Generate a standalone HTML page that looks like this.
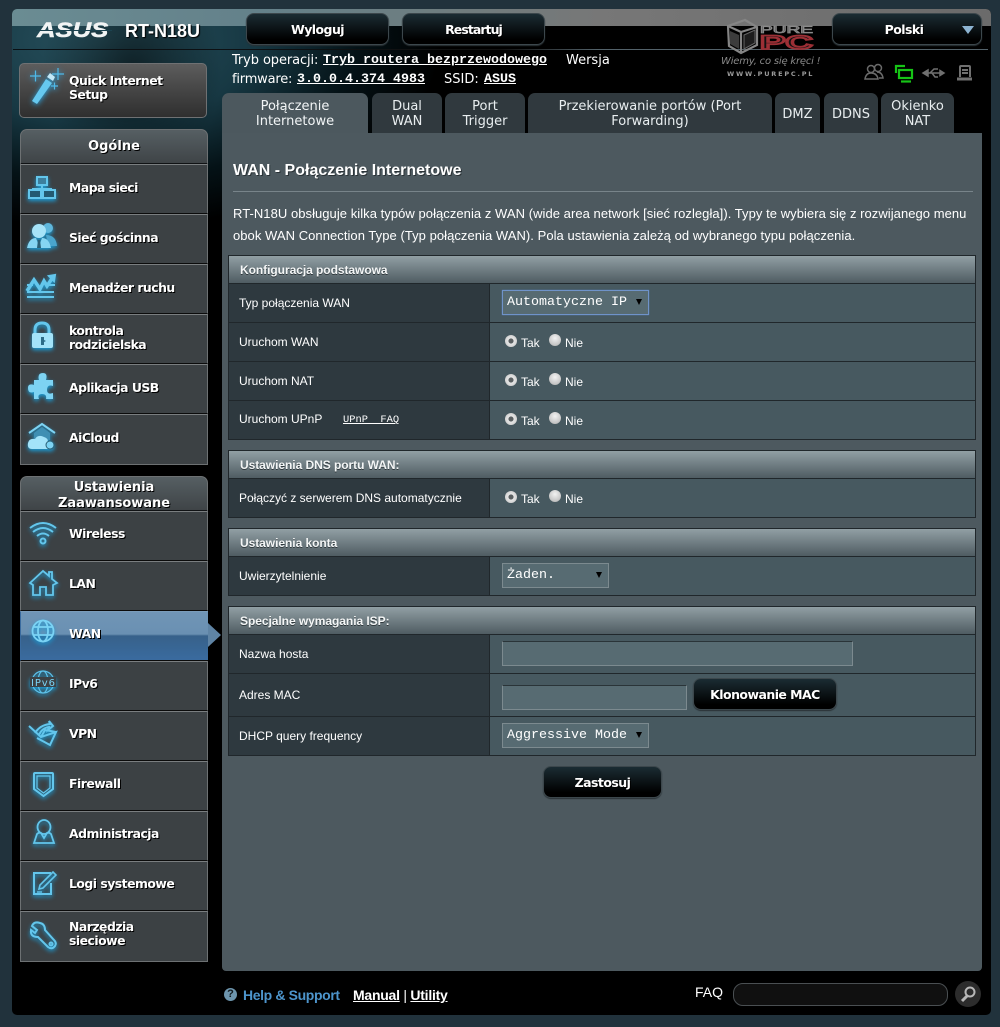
<!DOCTYPE html>
<html lang="pl"><head><meta charset="utf-8"><title>RT-N18U</title>
<style>
*{box-sizing:border-box}
html,body{margin:0;padding:0;width:1000px;height:1027px;overflow:hidden;background:#21323c}
body{position:relative;font-family:"Liberation Sans",sans-serif;color:#fff}
.a{position:absolute}
.frame{left:12px;top:9px;width:979px;height:1006px;background:#000;border-radius:5px;overflow:hidden}
.hb{position:absolute;left:0;top:0;width:979px;height:280px;background:
radial-gradient(ellipse 90px 110px at 120px 60px,rgba(0,0,0,.55),transparent 100%),
radial-gradient(ellipse 340px 190px at 90px 30px,#28525f 0,#173843 45%,rgba(5,20,25,.9) 75%,transparent 100%),#000}
.hb2{position:absolute;left:0;top:0;width:979px;height:17px;background:linear-gradient(90deg,#6a8c93 0,#64818a 25%,#6f7d7f 45%,#777 60%,#6b6b6b 100%)}
.hl{position:absolute;left:1px;top:40px;width:975px;height:1px;background:linear-gradient(90deg,#0a1014 0,#111 50%,#53626a 60%,#53626a 100%)}
.btn{position:absolute;background:linear-gradient(#1b2c33 0,#000 85%);border:1px solid #3c474c;border-radius:8px;box-shadow:0 1px 1px #2a3236;text-align:center;font:bold 12.5px "DejaVu Sans",sans-serif;letter-spacing:-.55px;color:#fff;text-shadow:1px 1px 0 #000}
.v{font-family:"DejaVu Sans",sans-serif}
.m{font-family:"Liberation Mono",monospace}
.hd{position:absolute;left:20px;width:188px;height:36px;background:linear-gradient(#565f63,#3f4447);border:1px solid #6d7173;border-bottom:2px solid #101214;border-radius:7px 7px 0 0;text-align:center;font:bold 13px/16px "DejaVu Sans",sans-serif;color:#fff;text-shadow:1px 1px 0 #000}
.it{position:absolute;left:20px;width:188px;height:50px;background:#3c4144;border-left:1px solid #6d7173;border-right:1px solid #6d7173;border-top:1px solid #7a7e80;border-bottom:1px solid #0b0b0b}
.it.last{border-bottom:1px solid #6d7173}
.it.sel{background:linear-gradient(#7095b6 0,#6a90b2 46%,#37618a 50%,#3a6b9f 100%);border-left-color:#3a6b9f;border-right:none;border-top-color:#7a9cba}
.lb{position:absolute;left:69px;font:bold 12.4px/14px "DejaVu Sans",sans-serif;letter-spacing:-.5px;color:#fff;text-shadow:1px 1px 0 #000;white-space:nowrap}
svg.ic{position:absolute;left:26px;width:32px;height:32px;overflow:visible;filter:drop-shadow(0 2px 2px #1b9ed8)}
.tab{position:absolute;top:93px;height:40px;background:#30393e;border-radius:7px 7px 0 0;text-align:center;font:13px/15px "DejaVu Sans",sans-serif;color:#e9eef0;display:flex;align-items:center;justify-content:center;padding:2px 4px 0}
.tab.on{background:#4c585e;color:#f2f5f6}
.panel{left:222px;top:133px;width:760px;height:838px;background:#4d595f;border-radius:0 0 4px 4px}
.sh{position:absolute;left:228px;width:748px;height:29px;background:linear-gradient(#919fa4 0,#4f5c62 100%);border:1px solid #20272b;font:bold 12px/28px "Liberation Sans",sans-serif;letter-spacing:-.05px;padding-left:11px;color:#f4f6f6;text-shadow:0 1px 0 #30393d}
.r{position:absolute;left:228px;width:748px;background:#475960;border:1px solid #20272b;border-top:none}
.r i{position:absolute;left:0;top:0;bottom:0;width:261px;background:#2e393f;border-right:1px solid #20272b;display:block}
.t{position:absolute;font:12px/14px "Liberation Sans",sans-serif;color:#fff;white-space:nowrap}
.rd{position:absolute;width:12px;height:12px;border-radius:50%;background:radial-gradient(circle at 50% 35%,#f2f2f2,#c4c4c4 70%,#a6a6a6)}
.rd.c{background:radial-gradient(circle,#5a5f61 0,#5a5f61 27%,#e6e6e6 33%,#d2d2d2 70%,#a8a8a8)}
.dd{position:absolute;background:#576b72;border:1px solid #7c8a8f;font:13.33px/23px "Liberation Mono",monospace;color:#fff;padding-left:4px;white-space:nowrap}
.dd b{position:absolute;right:6px;top:8px;width:0;height:0;border-left:3.5px solid transparent;border-right:3.5px solid transparent;border-top:6px solid #000}
.inp{position:absolute;background:#576b72;border:1px solid #7c8a8f;border-top:1px solid #2a3438;height:25px}
</style></head><body>
<div class="a frame">
<div class="hb"></div><div class="hb2"></div><div class="hl"></div>
</div>

<!-- logo -->
<div class="a" style="left:36px;top:17px;width:76px;height:26px;overflow:hidden"><span class="a" style="left:1px;top:0;font:italic bold 21px/28px 'Liberation Sans',sans-serif;color:#f2f4f4;-webkit-text-stroke:.5px #f2f4f4;transform:scaleX(1.22);transform-origin:0 0">ASUS</span><span class="a" style="left:0;top:13px;width:76px;height:1px;background:#1c4350"></span></div>
<div class="a" style="left:125px;top:20px;font:bold 18px/22px 'Liberation Sans',sans-serif;color:#fff;text-shadow:1px 1px 1px #000">RT-N18U</div>

<div class="btn" style="left:246px;top:13px;width:143px;height:32px;line-height:32px">Wyloguj</div>
<div class="btn" style="left:402px;top:13px;width:143px;height:32px;line-height:32px;letter-spacing:-.95px">Restartuj</div>
<div class="btn" style="left:832px;top:13px;width:150px;height:32px;line-height:32px;padding-right:6px">Polski<span class="a" style="left:129px;top:12px;width:0;height:0;border-left:6px solid transparent;border-right:6px solid transparent;border-top:8px solid #8db4d2"></span></div>

<!-- PurePC watermark -->
<svg class="a" style="left:726px;top:18px" width="92" height="38" viewBox="0 0 92 38">
<g fill="none" stroke="#858585" stroke-width="2.200"><path d="M2 8 L19 2 L31 9 L31 27 L15 35 L3 28 Z"/><path d="M2 8 L15 14 L31 9 M15 14 L15 35"/></g>
<path d="M4 13 L13 17 L13 31 L4 26Z" fill="#3c3c3c"/><path d="M18 17 L29 12 L29 25 L18 31Z" fill="#1d1d1d" stroke="#666"/>
<text x="34" y="15" font-family="Liberation Sans,sans-serif" font-size="10" fill="none" stroke="#8a8a8a" stroke-width=".8" textLength="53" lengthAdjust="spacingAndGlyphs">PURE</text>
<text x="34" y="31" font-family="Liberation Sans,sans-serif" font-weight="bold" font-size="19" fill="#111" stroke="#9c2f35" stroke-width="1.800" textLength="53" lengthAdjust="spacingAndGlyphs">PC</text>
</svg>
<div class="a" style="left:721px;top:56px;font:italic 10px/12px 'DejaVu Sans',sans-serif;color:#8a8a8a;white-space:nowrap;letter-spacing:-.2px">Wiemy, co się kręci !</div>
<div class="a" style="left:727px;top:70px;font:bold 6.5px/8px 'DejaVu Sans',sans-serif;color:#9a9a9a;white-space:nowrap;letter-spacing:1.8px">WWW.PUREPC.PL</div>

<!-- status text -->
<div class="a v" style="left:232px;top:53px;font-size:13px;line-height:16px;white-space:nowrap;letter-spacing:-.1px">Tryb operacji:</div>
<div class="a m" style="left:323px;top:53px;font-size:13.33px;line-height:16px;font-weight:bold;text-decoration:underline;white-space:nowrap">Tryb routera bezprzewodowego</div>
<div class="a v" style="left:566px;top:53px;font-size:13px;line-height:16px">Wersja</div>
<div class="a v" style="left:232px;top:72px;font-size:13px;line-height:16px;letter-spacing:-.2px">firmware:</div>
<div class="a m" style="left:297px;top:72px;font-size:13.33px;line-height:16px;font-weight:bold;text-decoration:underline;white-space:nowrap">3.0.0.4.374_4983</div>
<div class="a v" style="left:444px;top:72px;font-size:13px;line-height:16px">SSID:</div>
<div class="a m" style="left:484px;top:72px;font-size:13.33px;line-height:16px;font-weight:bold;text-decoration:underline">ASUS</div>

<!-- status icons -->
<svg class="a" style="left:862px;top:62px" width="125" height="22" viewBox="0 0 125 22" fill="none">
<g stroke="#6a6a6a" stroke-width="1.500"><circle cx="9" cy="7" r="3.500"/><circle cx="16" cy="6" r="3.500"/><path d="M3 17 Q4 11 9 11 Q15 11 16 17 Z"/><path d="M15 10 Q20 10 21 16 L17 16"/></g>
<g stroke="#16c316" stroke-width="2.200"><path d="M34 11 V4 H43"/><rect x="37" y="8" width="13" height="8"/><path d="M39 19.500 H49"/></g>
<g stroke="#707070" stroke-width="1.500"><path d="M62 11 H81"/><path d="M61 11 l5 -3 v6z" fill="#707070"/><path d="M68 11 L72 7 H76 M70 11 L73 15 H76"/><path d="M82 11 l-4 -2.500 v5z" fill="#707070"/></g>
<g stroke="#707070" stroke-width="2"><path d="M98 15 V5 Q98 4 99 4 H107 Q108 4 108 5 V15"/><path d="M100 8 H106 M100 11 H106"/><path d="M95 17 H110" stroke-width="3"/></g>
</svg>

<!-- quick setup -->
<div class="a" style="left:19px;top:63px;width:188px;height:55px;background:linear-gradient(#5d5d5d 0,#454545 50%,#2f2f2f 100%);border:1px solid #6f7173;border-radius:5px"></div>
<svg class="a" style="left:26px;top:66px;filter:drop-shadow(0 1px 3px #2aa8e6)" width="40" height="40" viewBox="0 0 40 40" fill="none">
<path d="M6 35 L20 13 L26 17 L11 38 Z" fill="#66c8ef"/><path d="M21 11 L24 7 L29 11 L27 15 Z" fill="#c3e9f8"/>
<g stroke="#4fb9e8" stroke-width="1.200"><path d="M4 10 H15 M9.500 4.500 V15.500"/><path d="M26 8 H38 M32 2 V14"/><path d="M25 20 H32 M28.500 16.500 V23.500"/></g></svg>
<div class="lb" style="top:74px">Quick Internet<br>Setup</div>

<!-- General menu -->
<div class="hd" style="top:129px;line-height:34px">Ogólne</div>
<div class="it" style="top:164px"></div><div class="lb" style="top:181px">Mapa sieci</div>
<div class="it" style="top:214px"></div><div class="lb" style="top:231px">Sieć gościnna</div>
<div class="it" style="top:264px"></div><div class="lb" style="top:281px">Menadżer ruchu</div>
<div class="it" style="top:314px"></div><div class="lb" style="top:324px">kontrola<br>rodzicielska</div>
<div class="it" style="top:364px"></div><div class="lb" style="top:381px">Aplikacja USB</div>
<div class="it last" style="top:414px;height:51px"></div><div class="lb" style="top:431px">AiCloud</div>

<svg class="ic" style="top:172px" viewBox="0 0 32 32" fill="none" stroke="#63c6ec" stroke-width="2"><rect x="11" y="5" width="10" height="8" fill="#3d7f9d"/><path d="M16 13 V17 M7 20 V17 H25 V20"/><rect x="3" y="18" width="12" height="8" fill="#235a72"/><rect x="17" y="18" width="12" height="8" fill="#235a72"/></svg>
<svg class="ic" style="top:222px" viewBox="0 0 32 32"><circle cx="22" cy="6" r="5" fill="#5fb7dc"/><path d="M20 13 Q30 13 31 24 L22 24Z" fill="#4aa5cd"/><circle cx="13" cy="9" r="7" fill="#a6e3f8"/><path d="M1 26 Q3 16 10 16 L13 24 L16 16 Q23 16 25 26 Z" fill="#85d5f3"/><path d="M12 18 L14 18 L15 26 L11 26Z" fill="#2a5f75"/></svg>
<svg class="ic" style="top:272px" viewBox="0 0 32 32" fill="none" stroke="#63c6ec" stroke-width="2"><path d="M1 19 L8 8 L14 17 L18 9 L21 14 L27 5" stroke-width="3.500"/><path d="M23 4 L29 3 L28 9Z" fill="#63c6ec"/><path d="M1 13 H7 M23 13 H29 M1 20 H28 M1 25 H28"/></svg>
<svg class="ic" style="top:322px" viewBox="0 0 32 32"><path d="M9 12 V8 Q9 1 16 1 Q23 1 23 8 V12" fill="none" stroke="#63c6ec" stroke-width="3"/><rect x="6" y="11" width="21" height="15" rx="2" fill="#a3e3f9"/><path d="M15 15 h3 v3 l2 1 l-2 1 v3 h-3z" fill="#2d6c88"/></svg>
<svg class="ic" style="top:372px" viewBox="0 0 32 32"><path d="M8 8 H13 Q11 1 17 1 Q22 1 20 8 H27 V14 Q21 12 21 18 Q21 23 27 21 V27 H20 Q21 22 16 22 Q11 22 13 27 H8 V20 Q2 22 2 16 Q2 11 8 13 Z" fill="#7dd3f3"/></svg>
<svg class="ic" style="top:422px" viewBox="0 0 32 32"><path d="M3 11 L16 2 L29 11" fill="none" stroke="#7dd3f3" stroke-width="2"/><path d="M8 11 L16 5 L24 11 V18 H8Z" fill="#3f8fb3"/><path d="M6 27 Q1 27 2 21 Q3 16 9 17 Q12 12 18 15 Q22 16 22 20 L26 27Z" fill="#a3e3f9"/><circle cx="24" cy="23" r="4" fill="#7dd3f3" stroke="#2a5f75"/></svg>

<!-- Advanced -->
<div class="hd" style="top:476px;padding-top:3px;letter-spacing:-.05px">Ustawienia<br>Zaawansowane</div>
<div class="it" style="top:511px"></div><div class="lb" style="top:527px">Wireless</div>
<div class="it" style="top:561px"></div><div class="lb" style="top:577px">LAN</div>
<div class="it sel" style="top:611px"></div><div class="lb" style="top:627px">WAN</div>
<div class="a" style="left:208px;top:623px;width:0;height:0;border-top:12px solid transparent;border-bottom:12px solid transparent;border-left:13px solid #5f84a5"></div>
<div class="it" style="top:661px"></div><div class="lb" style="top:677px">IPv6</div>
<div class="it" style="top:711px"></div><div class="lb" style="top:727px">VPN</div>
<div class="it" style="top:761px"></div><div class="lb" style="top:777px">Firewall</div>
<div class="it" style="top:811px"></div><div class="lb" style="top:827px">Administracja</div>
<div class="it" style="top:861px"></div><div class="lb" style="top:877px">Logi systemowe</div>
<div class="it last" style="top:911px;height:51px"></div><div class="lb" style="top:920px">Narzędzia<br>sieciowe</div>

<svg class="ic" style="top:519px" viewBox="0 0 32 32" fill="none" stroke="#63c6ec" stroke-width="2"><path d="M4 9 Q17 -1 30 9"/><path d="M7 13 Q17 5 27 13"/><path d="M11 17 Q17 12 23 17"/><circle cx="17" cy="22" r="2.500"/></svg>
<svg class="ic" style="top:569px" viewBox="0 0 32 32" fill="none" stroke="#63c6ec" stroke-width="1.800"><path d="M4 14 L17 2 L23 7 V3 H26 V10 L31 14 L27 16 V26 H20 V18 H14 V26 H7 V16 Z"/></svg>
<svg class="ic" style="top:619px" viewBox="0 0 32 32" fill="none" stroke="#7ad3f5" stroke-width="1.800"><circle cx="17" cy="12" r="10.500"/><ellipse cx="17" cy="12" rx="5" ry="10.500"/><path d="M7 8 H27 M7 16 H27"/></svg>
<svg class="ic" style="top:669px" viewBox="0 0 32 32" fill="none" stroke="#5cc0e8" stroke-width="1.200"><circle cx="17" cy="13" r="11"/><ellipse cx="17" cy="13" rx="5" ry="11"/><rect x="4" y="8" width="26" height="10" fill="#3c4144" stroke="none"/><text x="17" y="17" text-anchor="middle" font-family="DejaVu Sans,sans-serif" font-size="10" fill="#7ad3f5" stroke="none" textLength="24">IPv6</text></svg>
<svg class="ic" style="top:719px" viewBox="0 0 32 32" fill="none" stroke="#63c6ec" stroke-width="2"><path d="M3 7 L15 18 L30 13 L24 26 L11 19"/><path d="M9 14 Q14 6 24 5 L23 2 L27 7 L22 11 L23 8 Q16 9 13 16"/><path d="M15 18 L19 11 L30 13"/></svg>
<svg class="ic" style="top:769px" viewBox="0 0 32 32" fill="none" stroke="#63c6ec" stroke-width="2"><path d="M8 5 Q8 4 9 4 H26 Q27 4 27 5 V20 L17.500 27 L8 20 Z"/><path d="M11 7 H24 V19 L17.500 24 L11 19 Z" stroke-width="1.200"/></svg>
<svg class="ic" style="top:819px" viewBox="0 0 32 32" fill="none" stroke="#63c6ec" stroke-width="1.800"><ellipse cx="18" cy="8" rx="6.500" ry="7"/><path d="M8 24 L11 15 Q13 13 15 14 L18 19 L21 14 Q23 13 25 15 L28 24 Z"/></svg>
<svg class="ic" style="top:869px" viewBox="0 0 32 32" fill="none" stroke="#63c6ec" stroke-width="2"><path d="M25 14 V25 H8 V4 H25"/><path d="M13 20 L14 16 L27 3 L30 6 L17 19Z" stroke-width="1.600"/><path d="M11 23 H16" stroke-width="1.400"/></svg>
<svg class="ic" style="top:919px" viewBox="0 0 32 32" fill="none" stroke="#63c6ec" stroke-width="2"><path d="M14 4 Q8 2 6 7 L11 11 L9 14 L5 11 Q4 18 12 18 L22 28 Q26 31 29 27 Q31 24 28 21 L19 11 Q19 5 14 4Z"/><circle cx="25" cy="25" r="1.500"/></svg>

<!-- tabs -->
<div class="tab on" style="left:222px;width:146px">Połączenie<br>Internetowe</div>
<div class="tab" style="left:372px;width:70px">Dual<br>WAN</div>
<div class="tab" style="left:445px;width:80px">Port<br>Trigger</div>
<div class="tab" style="left:528px;width:244px">Przekierowanie portów (Port<br>Forwarding)</div>
<div class="tab" style="left:775px;width:45px">DMZ</div>
<div class="tab" style="left:824px;width:54px">DDNS</div>
<div class="tab" style="left:881px;width:73px">Okienko<br>NAT</div>

<!-- panel -->
<div class="a panel"></div>
<div class="a" style="left:233px;top:161px;font:bold 16px/19px 'Liberation Sans',sans-serif;color:#fff;text-shadow:1px 1px 0 #2a3236;white-space:nowrap">WAN - Połączenie Internetowe</div>
<div class="a" style="left:233px;top:191px;width:740px;height:1px;background:#78848a"></div>
<div class="a" style="left:233px;top:203px;width:740px;font:13px/22px 'Liberation Sans',sans-serif;letter-spacing:.05px;color:#fff;white-space:nowrap">RT-N18U obsługuje kilka typów połączenia z WAN (wide area network [sieć rozległa]). Typy te wybiera się z rozwijanego menu<br>obok WAN Connection Type (Typ połączenia WAN). Pola ustawienia zależą od wybranego typu połączenia.</div>

<!-- sec 1 -->
<div class="sh" style="top:255px">Konfiguracja podstawowa</div>
<div class="r" style="top:284px;height:39px"><i></i></div>
<div class="r" style="top:323px;height:39px"><i></i></div>
<div class="r" style="top:362px;height:39px"><i></i></div>
<div class="r" style="top:401px;height:39px"><i></i></div>
<div class="t" style="left:239px;top:296px">Typ połączenia WAN</div>
<div class="t" style="left:239px;top:335px">Uruchom WAN</div>
<div class="t" style="left:239px;top:374px">Uruchom NAT</div>
<div class="t" style="left:239px;top:412px">Uruchom UPnP</div>
<div class="a m" style="left:343px;top:413px;font-size:10.4px;line-height:14px;text-decoration:underline;white-space:pre">UPnP  FAQ</div>
<div class="dd" style="left:502px;top:290px;width:147px;height:25px;border:1px solid #6f93c9;box-shadow:0 0 1px #5b85c4">Automatyczne IP<b></b></div>

<div class="rd c" style="left:505px;top:335px"></div><div class="t" style="left:521px;top:336px">Tak</div><div class="rd" style="left:549px;top:334px"></div><div class="t" style="left:565px;top:336px">Nie</div>
<div class="rd c" style="left:505px;top:374px"></div><div class="t" style="left:521px;top:375px">Tak</div><div class="rd" style="left:549px;top:373px"></div><div class="t" style="left:565px;top:375px">Nie</div>
<div class="rd c" style="left:505px;top:413px"></div><div class="t" style="left:521px;top:414px">Tak</div><div class="rd" style="left:549px;top:412px"></div><div class="t" style="left:565px;top:414px">Nie</div>

<!-- sec 2 -->
<div class="sh" style="top:450px">Ustawienia DNS portu WAN:</div>
<div class="r" style="top:479px;height:39px"><i></i></div>
<div class="t" style="left:239px;top:491px">Połączyć z serwerem DNS automatycznie</div>
<div class="rd c" style="left:505px;top:491px"></div><div class="t" style="left:521px;top:492px">Tak</div><div class="rd" style="left:549px;top:490px"></div><div class="t" style="left:565px;top:492px">Nie</div>

<!-- sec 3 -->
<div class="sh" style="top:528px">Ustawienia konta</div>
<div class="r" style="top:557px;height:39px"><i></i></div>
<div class="t" style="left:239px;top:569px">Uwierzytelnienie</div>
<div class="dd" style="left:502px;top:563px;width:107px;height:25px">Żaden.<b></b></div>

<!-- sec 4 -->
<div class="sh" style="top:606px">Specjalne wymagania ISP:</div>
<div class="r" style="top:635px;height:39px"><i></i></div>
<div class="r" style="top:674px;height:43px"><i></i></div>
<div class="r" style="top:717px;height:39px"><i></i></div>
<div class="t" style="left:239px;top:647px">Nazwa hosta</div>
<div class="t" style="left:239px;top:688px">Adres MAC</div>
<div class="t" style="left:239px;top:729px">DHCP query frequency</div>
<div class="inp" style="left:502px;top:641px;width:351px"></div>
<div class="inp" style="left:502px;top:685px;width:185px"></div>
<div class="btn" style="left:693px;top:678px;width:144px;height:32px;line-height:32px">Klonowanie MAC</div>
<div class="dd" style="left:502px;top:723px;width:147px;height:25px">Aggressive Mode<b></b></div>
<div class="btn" style="left:543px;top:766px;width:119px;height:32px;line-height:32px">Zastosuj</div>

<!-- footer -->
<div class="a" style="left:224px;top:988px;width:13px;height:13px;border-radius:50%;background:#6d95ad;color:#10181c;font:bold 11px/13px 'Liberation Sans',sans-serif;text-align:center">?</div>
<div class="a" style="left:243px;top:987px;font:bold 14px/16px 'Liberation Sans',sans-serif;letter-spacing:-.37px;color:#4d95cc;white-space:nowrap">Help &amp; Support</div>
<div class="a" style="left:353px;top:987px;font:bold 14px/16px 'Liberation Sans',sans-serif;letter-spacing:-.25px;color:#fff;white-space:nowrap"><u>Manual</u> <span style="font-weight:normal">|</span> <u>Utility</u></div>
<div class="a" style="left:695px;top:984px;font:14px/16px 'Liberation Sans',sans-serif;color:#fff">FAQ</div>
<div class="a" style="left:733px;top:983px;width:215px;height:23px;border-radius:10px;border:1px solid #4a4f52;background:#101010"></div>
<svg class="a" style="left:955px;top:981px" width="26" height="26" viewBox="0 0 26 26"><circle cx="13" cy="13" r="13" fill="#2c2c2c"/><circle cx="15" cy="11" r="4.500" fill="none" stroke="#b8b8b8" stroke-width="2"/><path d="M12 15 L7 20" stroke="#b8b8b8" stroke-width="3"/></svg>
</body></html>
